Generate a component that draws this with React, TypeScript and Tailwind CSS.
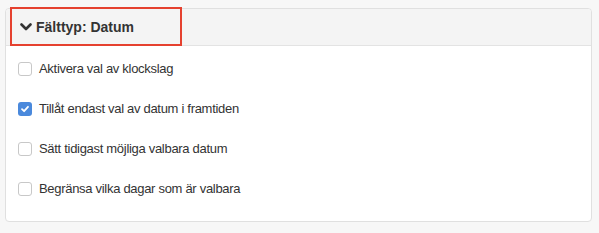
import React from "react";

function Check({ checked }: { checked?: boolean }) {
  if (checked) {
    return (
      <span className="flex h-[14px] w-[14px] shrink-0 items-center justify-center rounded-[3px] bg-[#4a89dc]">
        <svg width="10" height="10" viewBox="0 0 10 10">
          <path d="M2 5.2 L4.1 7.2 L8 2.8" fill="none" stroke="#fff" strokeWidth="1.8" strokeLinecap="round" strokeLinejoin="round" />
        </svg>
      </span>
    );
  }
  return <span className="block h-[14px] w-[14px] shrink-0 rounded-[3px] border border-[#c8c8c8] bg-white" />;
}

const items = [
  { label: "Aktivera val av klockslag", checked: false },
  { label: "Tillåt endast val av datum i framtiden", checked: true },
  { label: "Sätt tidigast möjliga valbara datum", checked: false },
  { label: "Begränsa vilka dagar som är valbara", checked: false },
];

export default function App() {
  return (
    <div className="h-[233px] w-[599px] bg-[#f7f7f7] pl-[5px] pr-[7px] pt-[8px] font-['Liberation_Sans',Arial,sans-serif]">
      <div className="h-[214px] rounded-[4px] border border-[#e0e0e0] bg-white">
        <div className="relative h-[37px] rounded-t-[4px] border-b border-[#e3e3e3] bg-[#f4f4f4]">
          <div className="absolute left-[4px] top-[-2px] h-[39px] w-[172px] border-2 border-[#e5412f]" />
          <div className="flex h-full items-center pl-[14px] text-[14px] font-bold text-[#333]">
            <svg width="12" height="10" viewBox="0 0 12 10" className="mr-[4px]">
              <path d="M1.5 2.5 L6 7 L10.5 2.5" fill="none" stroke="#333" strokeWidth="2.6" strokeLinecap="round" strokeLinejoin="round" />
            </svg>
            <span>Fälttyp: Datum</span>
          </div>
        </div>
        <div className="flex flex-col gap-[26px] pl-[12px] pt-[16px]">
          {items.map((it) => (
            <div key={it.label} className="flex h-[14px] items-center gap-[7px] text-[13px] tracking-[-0.3px] text-[#333]">
              <Check checked={it.checked} />
              <span>{it.label}</span>
            </div>
          ))}
        </div>
      </div>
    </div>
  );
}
